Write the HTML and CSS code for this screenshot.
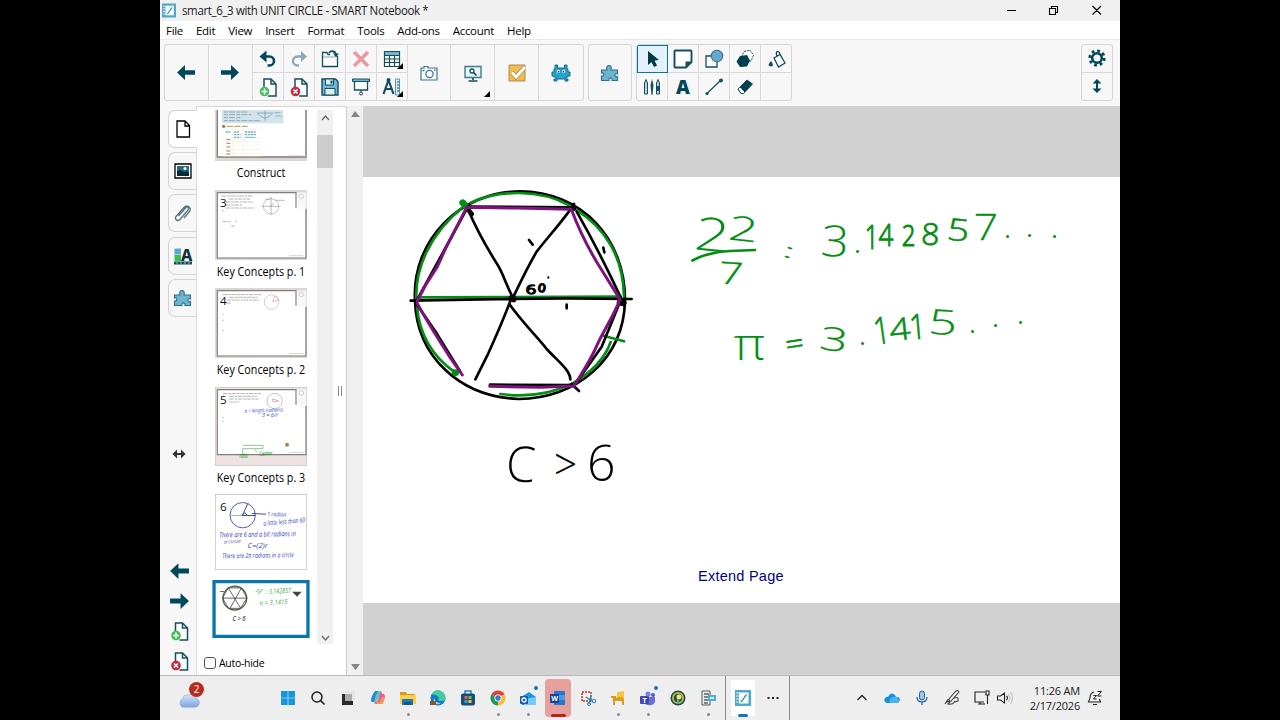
FILE: index.html
```html
<!DOCTYPE html>
<html lang="en">
<head>
<meta charset="utf-8">
<title>smart_6_3 with UNIT CIRCLE - SMART Notebook</title>
<link rel="stylesheet" href="styles.css">
</head>
<body>
<svg width="0" height="0" class="defs">
  <defs>
    <symbol id="left" viewBox="0 0 20 16"><path d="M1 8 9 .5v5.200h10v4.600H9v5.200z" fill="#00485a"/></symbol>
    <symbol id="right" viewBox="0 0 20 16"><path d="M19 8 11 .5v5.200H1v4.600h10v5.200z" fill="#00485a"/></symbol>
    <symbol id="page-add" viewBox="0 0 18 20"><path d="M5 10V2h7l5 5v12H9" fill="#fff" stroke="#174e5c" stroke-width="1.500"/><path d="M12 2v5h5" fill="none" stroke="#174e5c" stroke-width="1.500"/><circle cx="5.500" cy="14.500" r="4.800" fill="#43bd58"/><path d="M5.500 11.500v6m-3-3h6" stroke="#fff" stroke-width="1.500"/></symbol>
    <symbol id="page-del" viewBox="0 0 18 20"><path d="M5 10V2h7l5 5v12H9" fill="#fff" stroke="#174e5c" stroke-width="1.500"/><path d="M12 2v5h5" fill="none" stroke="#174e5c" stroke-width="1.500"/><circle cx="5.500" cy="14.500" r="4.800" fill="#c52944"/><path d="m3.500 12.500 4 4m0-4-4 4" stroke="#fff" stroke-width="1.500"/></symbol>
    <symbol id="puzzle" viewBox="0 0 20 20"><path d="M1.500 17.500v-4.500c3 1 3-4 0-3V7H7C5 1 13 1 11 7h6.500v4c-3.500-1.500-3.500 4 0 2.500v4H12c1-3.500-4-3.500-3 0z" fill="#6eb4d0" stroke="#2b6f88" stroke-width="1.100"/></symbol>
    <symbol id="notebook" viewBox="0 0 16 16"><path fill="#4fa9c9" d="M0 0h16v16H0z"/><path fill="#fff" d="M4 2.500h9.500v11H4z"/><path d="m6 11 5-7 1 1-5 7-2 .5z" fill="#3595b8"/><path d="M1 3h3M1 6h3M1 9h3M1 12h3" stroke="#e5f5fa"/></symbol>
    <symbol id="corner" viewBox="0 0 6 6"><path d="M6 0v6H0z" fill="#000"/></symbol>
  </defs>
</svg>
<div class="window">
  <header class="titlebar">
    <svg class="app-icon"><use href="#notebook"/></svg>
    <span class="title">smart_6_3 with UNIT CIRCLE - SMART Notebook *</span>
    <svg class="controls" viewBox="0 0 120 20"><path d="M12 9.500h9M54.500 7.500h6v6h-6zM56.500 7.500v-2h6v6h-2M97.500 5l8.500 8.500m0-8.500L97.500 13.500" fill="none" stroke="#000" stroke-width="1.100"/></svg>
  </header>
  <nav class="menubar"><span>File</span><span>Edit</span><span>View</span><span>Insert</span><span>Format</span><span>Tools</span><span>Add-ons</span><span>Account</span><span>Help</span></nav>

  <section class="toolbar">
    <div class="group main-tools">
      <div class="big"><svg class="arrow"><use href="#left"/></svg></div>
      <div class="big"><svg class="arrow"><use href="#right"/></svg></div>
      <div class="grid">
        <div class="cell"><svg class="i18" viewBox="0 0 18 18"><path d="M4 6.500h6.500a4.500 4.500 0 0 1 0 9H8.500" fill="none" stroke="#00485a" stroke-width="2.600"/><path d="M.5 6.500 7.500.5v12z" fill="#00485a"/></svg></div>
        <div class="cell"><svg class="i18" viewBox="0 0 18 18"><path d="M14 6.500H7.500a4.500 4.500 0 0 0 0 9H9" fill="none" stroke="#8caab0" stroke-width="2.400"/><path d="m17 6.500-6-5.500v11z" fill="#8caab0"/></svg></div>
        <div class="cell"><svg class="i20" viewBox="0 0 20 20"><path d="M10 5.500H8L7 3.500H2.500v14h15V7" fill="#fff" stroke="#174e5c" stroke-width="1.300"/><path d="M3 8h12" stroke="#7aa" /><path d="M9 4c2-3 6-2 7 1" fill="none" stroke="#174e5c" stroke-width="1.800"/><path d="M13 4.500h6L16 8.500z" fill="#174e5c"/></svg></div>
        <div class="cell"><svg class="i18" viewBox="0 0 18 18"><path d="m2 2 14 14m0-14L2 16" stroke="#e99aa2" stroke-width="3.600"/></svg></div>
        <div class="cell"><svg class="i18" viewBox="0 0 18 18"><path d="M1.500 1.500h15v15h-15z" fill="#fff"/><path d="M1.500 1.500h15v3.500h-15z" fill="#73b4d3"/><path d="M1.500 1.500h15v15h-15zM1.500 5.500h15M1.500 9h15M1.500 12.500h15M6.500 5v11.500m5-11.500v11.500" fill="none" stroke="#174e5c" stroke-width="1.200"/></svg><svg class="corner"><use href="#corner"/></svg></div>
        <div class="cell"><svg class="i20"><use href="#page-add"/></svg></div>
        <div class="cell"><svg class="i20"><use href="#page-del"/></svg></div>
        <div class="cell"><svg class="i18" viewBox="0 0 18 18"><path d="M1 1h13.500L17 3.500V17H1z" fill="#6eb4d8" stroke="#174e5c" stroke-width="1.400"/><path d="M4.500 1h8v6h-8zM4 10.500h10V17H4z" fill="#dceef6" stroke="#174e5c"/><path d="M9.500 2.500h2v3h-2z" fill="#174e5c"/></svg></div>
        <div class="cell"><svg class="i18" viewBox="0 0 18 18"><path d="M2.500 3h13v9h-13z" fill="#fff" stroke="#174e5c" stroke-width="1.300"/><path d="M.5 1h17v2.500H.5z" fill="#6eb4d8" stroke="#174e5c"/><path d="M9 12v2" stroke="#174e5c"/><circle cx="9" cy="15.500" r="1.500" fill="none" stroke="#174e5c"/></svg></div>
        <div class="cell"><svg class="i20" viewBox="0 0 20 20"><path d="m6.500 3-5 14M6.500 3l5 14M3 12h7" fill="none" stroke="#174e5c" stroke-width="2.200"/><circle cx="6.500" cy="3" r="2" fill="#174e5c"/><path d="M13.500 2h4v16h-4z" fill="#d9edf5" stroke="#5594aa"/><path d="M15 5h2m-2 3h2m-2 3h2m-2 3h2" stroke="#174e5c"/></svg><svg class="corner"><use href="#corner"/></svg></div>
      </div>
      <div class="big"><svg class="i18" viewBox="0 0 18 18"><path d="M1 4h3V2.500h4V4h9v12H1z" fill="#f7fafb" stroke="#39788b" stroke-width="1.200"/><circle cx="9.500" cy="10" r="3.600" fill="#fff" stroke="#39788b" stroke-width="1.200"/><path d="M2.500 6.500h2M14 6h1.500" stroke="#39788b" stroke-width="1.500"/></svg></div>
      <div class="big"><svg class="i20" viewBox="0 0 20 20"><path d="M2 3.500h16v11H2z" fill="#e9f4f9" stroke="#3d7c8e" stroke-width="1.400"/><circle cx="9" cy="8" r="2" fill="#fff" stroke="#174e5c" stroke-width="1.300"/><path d="m10.500 9.500 3 3M10 15v2M5.500 18h9" stroke="#174e5c" stroke-width="1.700"/></svg><svg class="corner"><use href="#corner"/></svg></div>
      <div class="big"><svg class="i18" viewBox="0 0 18 18"><path d="M1 1h16v16H1z" fill="#f0bc52" stroke="#ab8a50"/><path d="m4 8.500 4 4.500L17 3" fill="none" stroke="#a17d40" stroke-width="4.300"/><path d="m4 8.500 4 4.500L17 3" fill="none" stroke="#fff" stroke-width="3"/></svg></div>
      <div class="big"><svg class="i20" viewBox="0 0 20 20"><path d="M4 2h2.500v3h7V2H16v4h1v3h2v4h-2v1h-2v2h2v2h-3v-2H6v2H3v-2h2v-2H3v-1H1V9h2V6h1z" fill="#20a4d0" stroke="#1b6a88"/><path d="M6 7h2.500v3H6zM11.500 7H14v3h-2.500z" fill="#fff"/><path d="M7 8h1v1.500H7zM12 8h1v1.500h-1z" fill="#123"/></svg></div>
    </div>
    <div class="group addon"><div class="big"><svg class="i20"><use href="#puzzle"/></svg></div></div>
    <div class="group pens">
      <div class="grid">
        <div class="cell selected"><svg class="i18" viewBox="0 0 18 18"><path d="M4 1v14l3.500-3 2.500 5 3-1.500-2.500-5L15 10z" fill="#003848"/></svg></div>
        <div class="cell"><svg class="i20" viewBox="0 0 20 20"><path d="M1.500 2.500q0-1 1-1h15q1 0 1 1V13l-5.500 5.500H2.500q-1 0-1-1z" fill="#fff" stroke="#174e5c" stroke-width="1.900"/><path d="M12.500 18.500v-6h6z" fill="#174e5c"/></svg></div>
        <div class="cell"><svg class="i20" viewBox="0 0 20 20"><path d="M2 7h11v11H2z" fill="#fff" stroke="#174e5c" stroke-width="1.300"/><circle cx="13" cy="7" r="5.700" fill="#65a9cf" stroke="#356f8d" stroke-width="1.100"/></svg></div>
        <div class="cell"><svg class="i20" viewBox="0 0 20 20"><path d="m9 2.500 6-1.300 3.500 5L16 12l-6 1-3-6z" fill="#fff" stroke="#174e5c" stroke-dasharray="2 1"/><path d="m5 7 7-1 3 5.500-3 6-7 .5-3.500-5.500z" fill="#003f50"/></svg></div>
        <div class="cell"><svg class="i18" viewBox="0 0 18 18"><path d="m6 8 6-3.500L17 13l-6.500 4zM9 7q-2-7 2-5l3 6" fill="#fff" stroke="#174e5c" stroke-width="1.300"/><path d="M3 11q-5 5 0 5.500Q7 16 3 11" fill="#174e5c"/></svg></div>
        <div class="cell"><svg class="i20" viewBox="0 0 20 20"><path d="M2.500 17V6L4 2.500 5.500 6v11zM14.500 17V6L16 2.500 17.500 6v11z" fill="#b6d3dd" stroke="#174e5c"/><path d="M10 2 8.500 8l1 10h1l1-10z" fill="#174e5c"/><path d="M14.500 9h3v5h-3z" fill="#174e5c"/></svg></div>
        <div class="cell letter-a">A</div>
        <div class="cell"><svg class="i20" viewBox="0 0 20 20"><path d="M2.500 17 17 3" stroke="#174e5c" stroke-width="1.200"/><circle cx="3" cy="16.500" r="1.600" fill="#174e5c"/><circle cx="17" cy="3.500" r="2" fill="#174e5c"/></svg></div>
        <div class="cell"><svg class="i18" viewBox="0 0 18 18"><path d="m2 11 9-9 5.500 4-9 9.500H5z" fill="#003f50" stroke="#174e5c"/><path d="m2 11 2-2 5 5-1.500 1.500H5z" fill="#fff" stroke="#174e5c"/></svg></div>
        <div class="cell"></div>
      </div>
    </div>
    <div class="group right-tools">
      <div class="cell"><svg class="i18" viewBox="0 0 18 18"><circle cx="9" cy="9" r="4.800" fill="none" stroke="#00485a" stroke-width="2.600"/><circle cx="9" cy="9" r="7.200" fill="none" stroke="#00485a" stroke-width="2.800" stroke-dasharray="2.800 2.850"/></svg></div>
      <div class="cell"><svg class="i16" viewBox="0 0 16 16"><path d="M8 1 3.500 5.500H7v5H3.500L8 15l4.500-4.500H9v-5h3.500z" fill="#00485a"/></svg></div>
    </div>
  </section>

  <main class="workspace">
    <aside class="rail">
      <div class="tab active"><svg class="i20" viewBox="0 0 20 20"><path d="M4 2h8l4.500 4.500V18H4zM12 2v5h4.500" fill="#fff" stroke="#000" stroke-width="1.300"/></svg></div>
      <div class="tab"><svg class="i20" viewBox="0 0 20 20"><path d="M2 3h16v14H2z" fill="#fff" stroke="#000" stroke-width="1.300"/><path d="M4 5h12v10H4z" fill="#286a80"/><path d="m4 10 3-1 4 2 3-1 2 2v3H4z" fill="#082b36"/><circle cx="12" cy="7.500" r="1.500" fill="#fff"/></svg></div>
      <div class="tab"><svg class="i20" viewBox="0 0 20 20"><path d="m5.500 13 7-8c2-2 4 0 2.500 2l-8 9.500c-2.500 2.500-6-.5-4-3L11 4.500c3-3.500 8 .5 5.500 4L11 15" fill="none" stroke="#567681" stroke-width="1.300"/></svg></div>
      <div class="tab"><svg class="i20" viewBox="0 0 20 20"><path d="M1.500 2.500H8v6H1.500z" fill="#5ba8c8"/><path d="M1.500 9H8v6H1.500z" fill="#39bd55"/><path d="M1 15.500h18v3H1z" fill="#174e5c"/><path d="M3 17h15" stroke="#fff" stroke-width=".6" stroke-dasharray="2 2"/></svg><b class="style-a">A</b></div>
      <div class="tab"><svg class="i20"><use href="#puzzle"/></svg></div>
      <svg class="swap" viewBox="0 0 14 12"><path d="M2 6h10" stroke="#333" stroke-width="2"/><path d="M5 1.500.5 6 5 10.500V6zm4 0L13.500 6 9 10.500V6z" fill="#333"/></svg>
      <div class="rail-tools">
        <svg><use href="#left"/></svg><svg><use href="#right"/></svg><svg><use href="#page-add"/></svg><svg><use href="#page-del"/></svg>
      </div>
    </aside>
    <section class="sorter">
      <div class="list-row">
        <div class="thumbs">
          <div class="thumb t1"><svg viewBox="163 16 276 153">
            <rect x="163" y="16" width="276" height="153" fill="#dcd7d5"/><path d="M170 10h264v147H170z" fill="#fff"/><path d="M170 10v147h266V16" fill="none" stroke="#837d7b" stroke-width="4"/>
            <path d="M184 16h184v40H184z" fill="#d2e4eb"/><path d="M190 22h70m-70 8h82m-82 9h50m-50 9h112" stroke="#8fa5b3" stroke-width="3" stroke-dasharray="12 3 18 4"/>
            <path d="M290 25h45m-22-8v32m-24-25q24 32 48 0m5 0h18m-17 10h20" fill="none" stroke="#6994ab" stroke-width="2"/>
            <circle cx="189" cy="65" r="5" fill="#ac783d"/><path d="M199 65h63" stroke="#c5a379" stroke-width="4" stroke-dasharray="18 4"/>
            <path d="M184 74h118M184 155h118M215 74v81m32-81v81M184 99h118M184 110h118m-118 12h118m-118 12h118m-118 12h118" fill="none" stroke="#e6dfba"/>
            <path d="M195 82h14m11 0h15m18 0h32m-65 8h20m12 0h35m-67 8h20m14 0h30" stroke="#6fb4bb" stroke-width="4" stroke-dasharray="7 2"/><path d="M197 105h12m-12 11h12m-12 11h12m-12 12h12m-12 9h12" stroke="#a77b60" stroke-width="3"/><path d="M385 154h43" stroke="#aaa" stroke-width="2"/>
          </svg></div>
          <div class="caption">Construct</div>
          <div class="thumb t2"><svg viewBox="163 255 276 210"><rect x="163" y="255" width="276" height="210" fill="#dcd7d5"/><path d="M170 263h264v195H170z" fill="#fff"/><path d="M170 262v197h266V311M170 263h236v45" fill="none" stroke="#837d7b" stroke-width="3.500"/><path d="M410 263h27v48h-27z" fill="#f7f7f7"/><circle cx="422" cy="274" r="7" fill="none" stroke="#bbb" stroke-width="2"/>
            <path d="M184 273h95m-74 9h64m-74 9h82m-82 9h50m-50 9h85M184 317h5m-4 33h27m11 0h5m-16 13h10" stroke="#b0b0b0" stroke-width="3" stroke-dasharray="13 3 8 2"/><circle cx="331" cy="304" r="23" fill="none" stroke="#aaa" stroke-width="2"/><path d="M302 304h58m-29-29v55m-18-47h15m14 3h30m-33 8-9 10" stroke="#999" stroke-width="2"/><path d="M385 452h43" stroke="#bbb" stroke-width="2"/><text class="page-no" x="178" y="306">3</text></svg></div>
          <div class="caption">Key Concepts p. 1</div>
          <div class="thumb t3"><svg viewBox="163 255 276 210"><rect x="163" y="255" width="276" height="210" fill="#dcd7d5"/><path d="M170 263h264v195H170z" fill="#fff"/><path d="M170 262v197h266V311M170 263h236v45" fill="none" stroke="#837d7b" stroke-width="3.500"/><path d="M410 263h27v48h-27z" fill="#f7f7f7"/><circle cx="422" cy="274" r="7" fill="none" stroke="#bbb" stroke-width="2"/>
            <path d="M187 275h114m-95 8h84m-92 8h98m-98 9h14M185 334h4m-4 18h4m-4 30h4" stroke="#b0b0b0" stroke-width="3" stroke-dasharray="13 3 8 2"/><circle cx="333" cy="297" r="22" fill="none" stroke="#bbb" stroke-width="2"/><path d="m335 296 8-18 12 14-18 3" fill="none" stroke="#dc9696" stroke-width="2"/><path d="M385 452h43" stroke="#bbb" stroke-width="2"/><text class="page-no" x="178" y="306">4</text></svg></div>
          <div class="caption">Key Concepts p. 2</div>
          <div class="thumb t4"><svg viewBox="163 288 276 237"><rect x="163" y="288" width="276" height="237" fill="#eee3e2" stroke="#c8c4c3" stroke-width="4"/><path d="M170 296h264v194H170z" fill="#fff"/><path d="M170 295v196h266V344M170 296h236v45" fill="none" stroke="#837d7b" stroke-width="3.500"/><path d="M410 296h27v48h-27z" fill="#f7f7f7"/><circle cx="422" cy="306" r="7" fill="none" stroke="#bbb" stroke-width="2"/>
            <path d="M187 308h114m-95 8h84m-84 8h88m-88 9h30M185 380h4m-4 12h4" stroke="#b0b0b0" stroke-width="3" stroke-dasharray="13 3 8 2"/><circle cx="342" cy="330" r="23" fill="none" stroke="#aaa" stroke-width="2"/><path d="m336 324 18 6-17 3z" fill="none" stroke="#dc8585" stroke-width="2"/><path d="M246 463h61v10h-61v17m36-14 7 7" fill="none" stroke="#58a958" stroke-width="2"/><circle cx="379" cy="461" r="6" fill="#a6865c"/>
            <text class="mini blue" data-box="252 351 115 16 -2">a = length (radians)</text><text class="mini blue" data-box="304 366 48 11 0">3 = 6/r</text><text class="mini green" data-box="236 484 25 16 0">radius</text><text class="mini green" data-box="296 480 40 13 -4">Center</text><path d="M385 484h43" stroke="#bbb" stroke-width="2"/><text class="page-no" x="178" y="339">5</text></svg></div>
          <div class="caption">Key Concepts p. 3</div>
          <div class="thumb t5"><svg viewBox="163 27 276 227"><rect x="164" y="28" width="274" height="225" fill="#fff" stroke="#bbb" stroke-width="2"/><circle cx="246" cy="90" r="38" fill="none" stroke="#555db0" stroke-width="3"/><path d="M208 91h37" stroke="#91cb94" stroke-width="3"/><path d="m245 91 17-37m-17 37h39m-39 0q8-16 14 0m15-6 42 2" fill="none" stroke="#3c4daa" stroke-width="3"/>
            <text class="mini blue" data-box="322 80 54 14 2">1 radian</text><text class="mini blue" data-box="308 101 126 16 -5">a little less than 60</text><text class="mini blue" data-box="177 138 228 17 -1">There are 6 and a bit radians in</text><text class="mini blue" data-box="190 163 50 11 -3">a circle</text><text class="mini blue" data-box="262 173 60 20 0">C=(2)r</text><text class="mini blue" data-box="186 202 213 16 -1">There are 2π radians in a circle</text><text class="page-no" x="178" y="77">6</text></svg></div>
          <div class="thumb t6"><svg viewBox="155 285 295 176"><path d="M160 290h285v166H160z" fill="#fff" stroke="#0876aa" stroke-width="10"/><circle cx="223" cy="340" r="36" fill="none" stroke="#506550" stroke-width="4"/><path d="m203 309-17 31 18 31h36l20-31-17-31zm0 0 38 62m2-62-34 61m-23-30h74M178 320h12" fill="none" stroke="#444" stroke-width="2.500"/><path d="M397 321h29l-14 15z" fill="#444"/>
            <text class="mini black" data-box="217 393 39 16 0">C &gt; 6</text><text class="mini lime" data-box="286 311 20 9 0">22</text><text class="mini lime" data-box="291 323 10 9 0">7</text><text class="mini lime" data-box="318 310 76 16 -3">: 3.142857</text><text class="mini lime" data-box="298 345 85 15 -3">π = 3.1415</text></svg></div>
        </div>
        <div class="scroll-small"><svg viewBox="0 0 16 534"><path d="M0 25h16v33H0z" fill="#cdcdcd"/><path d="m5 10 3.500-4 3.500 4M5 526l3.500 4 3.500-4" fill="none" stroke="#666" stroke-width="1.200"/></svg></div>
      </div>
      <div class="autohide"><i></i><span>Auto-hide</span></div>
    </section>
    <div class="splitter"><i></i></div>
    <div class="scroll-main"><svg viewBox="0 0 16 568"><path d="m4 11 4-6 5 6zM4 558h9l-4.500 6z" fill="#858585"/></svg></div>
    <section class="canvas">
      <div class="page">
        <svg viewBox="363 177 757 426">
          <g transform="translate(400 180) scale(.33333)" fill="none" stroke-linecap="round" stroke-linejoin="round">
            <path class="kb" d="M45 362C35 180 180 35 360 34C545 35 675 175 675 360C672 540 525 658 355 657C180 650 50 530 45 362"/>
            <path class="kg" d="M49 360C45 270 85 165 190 80M212 68C300 28 420 28 508 76M526 88C615 142 670 230 672 350M51 380C58 460 90 525 165 577M301 642C380 653 455 640 515 612C570 580 615 535 632 486"/>
            <path class="kg blob" d="M188 68l8 8M165 578h2"/>
            <path class="kg" d="M55 352 662 350M610 467l62 17"/>
            <path class="kb" d="M32 362 200 359 330 357 500 355 695 357M205 90C230 150 265 210 290 250C310 280 320 320 340 355M522 72C500 110 440 175 410 215C380 265 355 320 338 355M330 365C310 420 285 475 265 520L226 598M330 375C370 430 415 475 440 507C475 545 510 570 511 598M205 80l305 2M530 95C570 165 610 240 662 352M200 87 125 225 52 358M48 370 110 460 181 575M655 378 605 500 524 615 270 614M515 612l22 21M387 180l11 14M610 203l3 14M500 374v11"/>
            <path class="kb blob" d="M335 355l5 2M660 367l10 2"/>
            <path class="kb" d="M207 92l8 10M516 83l5 3" style="stroke-width:14"/>
            <path class="kp" d="M52 362 80 310 112 260 138 203 200 82 350 84 514 88C535 145 570 215 605 270L660 358C645 400 618 440 595 487C575 535 555 565 522 618L420 622 269 619M52 370C75 415 120 485 150 532L187 585"/>
            <path d="M445 292v1" stroke="#000" stroke-width="6"/>
          </g>
          <path class="rule" d="M692.500 260.500C702 255 715 252 730 251L755 250"/>
          <g class="ink green">
            <text data-box="698 217 28 34 6">2</text><text data-box="731 216 24 25 6">2</text><text data-box="721 262 20 22 4">7</text><text data-box="786 247 5 11 18">:</text>
            <text data-box="823 225 23 32 4">3</text><text data-box="856 250 3 3 0">.</text><text data-box="867 225 6 24 0">1</text><text data-box="879 223 14 23 0">4</text><text data-box="903 224 11 22 0">2</text><text data-box="923 223 15 22 3">8</text><text data-box="950 219 17 22 6">5</text><text data-box="976 214 20 26 0">7</text><text data-box="1006 235 3 3 0">.</text><text data-box="1028 234 3 3 0">.</text><text data-box="1053 235 3 3 0">.</text>
            <text data-box="734 336 30 24 0">π</text><text data-box="787 340 15 7 -9">=</text><text data-box="822 327 23 24 8">3</text><text data-box="861 342 3 3 0">.</text><text data-box="876 317 7 27 -8">1</text><text data-box="890 318 20 22 -6">4</text><text data-box="912 314 7 25 -5">1</text><text data-box="932 310 22 25 4">5</text><text data-box="971 330 3 3 0">.</text><text data-box="994 324 3 3 0">.</text><text data-box="1019 321 3 3 0">.</text>
          </g>
          <g class="ink black"><text data-box="509 446 25 36 4">C</text><text data-box="556 454 19 21 0">&gt;</text><text data-box="590 444 23 37 0">6</text><text data-box="527 285 8 9 0">6</text><text data-box="539 284 6 8 8">0</text></g>
        </svg>
        <div class="extend">Extend Page</div>
      </div>
    </section>
  </main>

  <footer class="taskbar">
    <div class="weather"><svg viewBox="0 0 28 28"><defs><linearGradient id="cl" y2="1" x2="0"><stop stop-color="#d8e7f8"/><stop offset="1" stop-color="#7da5e0"/></linearGradient></defs><path d="M6 26a5 5 0 0 1 0-9q1-5 6-4 6-3 8 3 5 2 4 6-1 4-4 4z" fill="url(#cl)" stroke="#87a7d4" stroke-width=".6"/></svg><b>2</b></div>
    <div class="apps">
      <div class="app"><svg viewBox="0 0 16 16"><path d="M1 1h6.700v6.700H1zM8.300 1H15v6.700H8.300zM1 8.300h6.700V15H1zM8.300 8.300H15V15H8.300z" fill="#1697df"/></svg></div>
      <div class="app"><svg viewBox="0 0 16 16"><circle cx="7" cy="7" r="5" fill="none" stroke="#222" stroke-width="1.500"/><path d="m10.500 10.500 4 4" stroke="#222" stroke-width="1.700"/></svg></div>
      <div class="app"><svg viewBox="0 0 16 16"><path d="M5 1h10v10H5z" fill="#e5e5e5"/><path d="M2 4h3v7h8v4H2z" fill="#2b2b2b"/><path d="M5 4h7v7H5z" fill="#aaa"/></svg></div>
      <div class="app"><svg viewBox="0 0 16 16"><path d="M5 1h6L9 6 6 12H2Q0 11 2 6z" fill="#2389e5"/><path d="M10 1q2 0 2 3h2q2 2 0 6l-2 4H6q-2 0-2-3h4z" fill="#e75bb0"/><path d="m6 5 2-4h3l-2 5-2 6H4z" fill="#69c99f"/><path d="M6 12h4l2-5h3q-1 7-4 7H7z" fill="#f29d45"/></svg></div>
      <div class="app run"><svg viewBox="0 0 16 16"><path d="M0 2h6l1 2h8v4H0z" fill="#d99a20"/><path d="M0 5h16v9H0z" fill="#ffcf48"/><path d="M2 9h11v6H2z" fill="#1979ba"/><path d="M4 12h7v3H4z" fill="#0b568e"/></svg></div>
      <div class="app"><svg viewBox="0 0 16 16"><circle cx="8" cy="8" r="7.500" fill="#1479bd"/><path d="M1 5Q8-5 15 5q2 6-4 6-4 0-2-3Q6 3 1 5" fill="#44cda1"/><path d="M5 8q-1 5 6 5-5 3-8-1z" fill="#92d9ed"/><path d="M0 11h6v4H0z" fill="#8b582a"/></svg></div>
      <div class="app"><svg viewBox="0 0 16 16"><path d="M5 4V1h6v3" fill="none" stroke="#2389bc" stroke-width="1.500"/><rect x="1" y="3.500" width="14" height="12" rx="2" fill="#174e78"/><path fill="#ec6341" d="M4.500 6h3v3h-3z"/><path fill="#82bb42" d="M8.500 6h3v3h-3z"/><path fill="#34a9db" d="M4.500 10h3v3h-3z"/><path fill="#f6c443" d="M8.500 10h3v3h-3z"/></svg></div>
      <div class="app run"><svg viewBox="0 0 16 16"><path d="M8 8 1.500 4.200A7.500 7.500 0 0 1 14.500 4.200z" fill="#df4335"/><path d="M8 8 1.500 4.200A7.500 7.500 0 0 0 8 15.500z" fill="#25975a"/><path d="M8 8h0l6.500-3.800A7.500 7.500 0 0 1 8 15.500z" fill="#f4bd34"/><circle cx="8" cy="8" r="3.600" fill="#fff"/><circle cx="8" cy="8" r="2.700" fill="#367bd5"/></svg></div>
      <div class="app run notify"><svg viewBox="0 0 16 16"><path d="m1 7 8-5 7 5v8H2z" fill="#2493df"/><path d="m5 9 11-2v8H4z" fill="#75ccf3"/><rect y="6" width="8" height="8" rx="1" fill="#155eae"/><circle cx="4" cy="10" r="2" fill="none" stroke="#fff" stroke-width="1.300"/></svg></div>
      <div class="app word"><svg viewBox="0 0 16 16"><path d="M4 1h11v14H4z" fill="#2678d0"/><path d="M4 5h11v5H4z" fill="#459ce2"/><rect y="4" width="9" height="9" rx="1" fill="#154696"/><text x="1.200" y="11" class="tile">W</text></svg></div>
      <div class="app"><svg viewBox="0 0 16 16"><path d="M2 2h9v9H2z" fill="none" stroke="#b53c2b" stroke-width="1.500" stroke-dasharray="2 1"/><path d="m6 7 7 5M11 6l-2 8" stroke="#2385b3" stroke-width="1.300"/><circle cx="14" cy="11" r="1.800" fill="none" stroke="#2385b3"/><circle cx="9" cy="14" r="1.500" fill="none" stroke="#2385b3"/></svg></div>
      <div class="app run"><svg viewBox="0 0 16 16"><path d="M7 2 14 1v8l-7 1z" fill="#f4c741"/><path d="m3 8 8-1 3 2v6h-2v-4H5v4H3zM1 6h5v2H1z" fill="#db9b1c"/></svg></div>
      <div class="app run notify"><svg viewBox="0 0 16 16"><circle cx="8" cy="4" r="2.500" fill="#777be4"/><circle cx="13" cy="5" r="2" fill="#5157bf"/><path d="M4 7h11v5q-2 4-7 3-3 0-4-3z" fill="#6870d5"/><rect y="6" width="9" height="8" rx="1" fill="#4049ad"/><text x="2.500" y="12.500" class="tile">T</text></svg></div>
      <div class="app"><svg viewBox="0 0 16 16"><circle cx="8" cy="8" r="7.500" fill="#1b4e49"/><circle cx="8" cy="8" r="5" fill="none" stroke="#b6b34a" stroke-width="2"/><circle cx="9" cy="7" r="2.500" fill="#eee573"/><path d="M8 9v5" stroke="#53ad98" stroke-width="2"/></svg></div>
      <div class="app run"><svg viewBox="0 0 16 16"><path d="M2 1h8v14H2z" fill="#e9eeee" stroke="#4e5b5b"/><path d="M4 4h5M4 7h4m-4 3h5m-5 3h4" stroke="#59636a" stroke-width="1.500"/><path d="M8 5h8v6H8z" fill="#4facd4"/><path d="M10 7h4v2h-4z" fill="#d9f3fc"/></svg></div>
      <div class="app current"><svg><use href="#notebook"/></svg></div>
      <div class="app more"><svg viewBox="0 0 16 16"><path d="M2.500 8h2m2.500 0h2m2.500 0h2" stroke="#222" stroke-width="2"/></svg></div>
    </div>
    <div class="tray">
      <svg viewBox="0 0 16 16"><path d="m3.500 10 4.500-4.500 4.500 4.500" fill="none" stroke="#222" stroke-width="1.300"/></svg>
      <svg viewBox="0 0 16 16"><path d="M3 13Q-1 12 1 8q2-2 3-1Q7 1 11 5l1 2q5 0 3.500 4Q15 13 12 13z" fill="#158ee0"/><path d="M6 13q-2-5 3-6 5-1 6 4 0 2-3 2z" fill="#43b5f5"/></svg>
      <svg viewBox="0 0 16 16"><rect x="5.500" y="1" width="5" height="9" rx="2.500" fill="#9fc6ec" stroke="#205ca8"/><path d="M3 7q0 5 5 5t5-5M8 12v3" fill="none" stroke="#205ca8" stroke-width="1.200"/></svg>
      <svg viewBox="0 0 16 16"><path d="m4 10 8-9q2-1 3 1L7 11l-4 1zM1 14q4-8 5-2l-2 2q5 1 7-3m-1-3q5-2 4 3l-3 1" fill="none" stroke="#444" stroke-width="1.100"/></svg>
      <svg viewBox="0 0 16 16"><path d="M11 2H1v10h9M4 14h7M6 12v2M12 1h3v4h-3zM13.500 5v9" fill="none" stroke="#222" stroke-width="1.100"/></svg>
      <svg class="sound" viewBox="0 0 16 16"><path d="M1 6h3l4-3v10l-4-3H1zM10 6q2 2 0 4" fill="none" stroke="#222" stroke-width="1.100"/><path d="M12 4q3 4 0 8m2-10q4 6 0 12" fill="none" stroke="#bbb"/></svg>
      <div class="clock"><span>11:26 AM</span><span>2/17/2026</span></div>
      <svg class="bell" viewBox="0 0 16 16"><path d="M7 2Q3 3 3 8l-1.500 4h12l-1-3M6 14.500h4" fill="none" stroke="#222" stroke-width="1.100"/><path d="M10.500 1.500h4l-4 4.500h4M6.500 5.500h3l-3 3.500h3" fill="none" stroke="#222"/></svg>
    </div>
  </footer>
</div>
<script src="ink.js"></script>
</body>
</html>
```

FILE: styles.css
```css
* { box-sizing: border-box; }
body { margin: 0; background: #000; overflow: hidden; font-family: "Open Sans", "Noto Sans", sans-serif; color: #1b1b1b; }
svg { display: block; flex: none; }
.defs { position: absolute; }
.window { width: 960px; height: 720px; margin: 0 auto; background: #f7f7f7; display: flex; flex-direction: column; overflow: hidden; }
.titlebar { height: 21px; flex: none; background: #f0f0f0; display: flex; align-items: center; padding-left: 2px; }
.app-icon { width: 14px; height: 15px; }
.title { font-size: 12px; letter-spacing: -.37px; margin-left: 6px; white-space: nowrap; flex: 1; transform: scaleX(.957); transform-origin: left; }
.controls { width: 120px; height: 20px; margin-right: 5px; }
.menubar { height: 18px; flex: none; background: #fff; color: #000; display: flex; align-items: center; gap: 13px; padding-left: 6px; font-size: 11.500px; letter-spacing: -.3px; }
.toolbar { height: 67px; flex: none; border-top: 1px solid #e7e7e7; display: flex; padding: 4px 7.500px 0 4px; gap: 4px; }
.group { height: 57px; border: 1px solid #d5d5d5; border-radius: 3px; display: flex; overflow: hidden; }
.main-tools { width: 420px; }
.addon { width: 44px; }
.pens { width: 156px; }
.big { width: 44px; min-width: 0; display: flex; align-items: center; justify-content: center; position: relative; border-right: 1px solid #d9d9d9; }
.big:last-child { border-right: 0; }
.grid { flex: none; display: grid; grid-template-columns: repeat(5, 31px); grid-template-rows: 28px 27px; }
.cell { min-width: 0; display: flex; align-items: center; justify-content: center; border-right: 1px solid #d9d9d9; border-bottom: 1px solid #d9d9d9; position: relative; }
.pens .cell:nth-child(5n) { border-right: 0; }
.cell:nth-child(n+6) { border-bottom: 0; }
.cell.selected { background: #e3f1fb; border: 1.500px solid #0877a0; }
.i16 { width: 16px; height: 16px; }
.i18 { width: 18px; height: 18px; }
.i20 { width: 20px; height: 20px; }
.arrow { width: 20px; height: 17px; }
.corner { position: absolute; right: 4px; bottom: 3px; width: 6px; height: 6px; }
.letter-a { font: 900 19px "Noto Sans", sans-serif; color: #00485a; }
.right-tools { margin-left: auto; width: 32px; flex-direction: column; }
.right-tools .cell { height: 28px; border-right: 0; }
.right-tools .cell:last-child { border-bottom: 0; }
.workspace { height: 569px; flex: none; display: flex; }
.rail { width: 37px; padding: 4px 0 0 8px; display: flex; flex-direction: column; border-right: 1px solid #ddd; }
.tab { width: 29px; height: 38px; margin-bottom: 4.200px; padding-right: 1px; flex: none; border: 1px solid #d3d3d3; border-right: 0; border-radius: 7px 0 0 7px; display: flex; align-items: center; justify-content: center; position: relative; }
.tab.active { background: #fff; }
.style-a { position: absolute; left: 12px; top: 6px; font: 800 16px "Noto Sans", sans-serif; color: #12303a; }
.swap { width: 14px; height: 12px; margin: 127px 0 0 4px; }
.rail-tools { display: flex; flex-direction: column; gap: 10px; margin: 101px 0 0 1px; }
.rail-tools svg { width: 21px; height: 20px; }
.sorter { width: 136px; background: #fff; border-top: 1px solid #d5d5d5; display: flex; flex-direction: column; }
.list-row { height: 540px; padding-top: 3px; display: flex; }
.thumbs { width: 120px; height: 534px; display: flex; flex-direction: column; align-items: center; padding-left: 7px; overflow: hidden; }
.thumb { width: 92px; flex: none; }
.thumb svg { width: 100%; height: 100%; }
.t1 { height: 51px; }
.t2, .t3 { height: 70px; }
.t4 { height: 79px; }
.t5 { height: 76px; }
.t6 { width: 98px; height: 58px; margin-top: 10px; }
.caption { flex: none; height: 28.500px; width: 120px; text-align: center; font-size: 12px; line-height: 23px; white-space: nowrap; color: #000; transform: scaleX(.895); }
.page-no { font: 35px "Open Sans", sans-serif; fill: #111; }
.scroll-small { width: 16px; height: 534px; background: #f0f0f0; }
.scroll-small svg { width: 16px; height: 534px; }
.autohide { display: flex; align-items: center; gap: 3px; padding: 4px 0 0 7px; height: 27px; font-size: 10.500px; letter-spacing: -.3px; color: #000; }
.autohide i { width: 12px; height: 12px; border: 1px solid #555; border-radius: 3px; }
.splitter { width: 14px; background: #fff; border-top: 1px solid #d5d5d5; border-right: 1px solid #ccc; display: flex; align-items: center; justify-content: center; }
.splitter i { width: 4px; height: 10px; border: solid #888; border-width: 0 1px; }
.scroll-main { width: 16px; background: #f0f0f0; }
.scroll-main svg { width: 16px; height: 568px; }
.canvas { width: 757px; background: #d1d1d1; padding-top: 71px; }
.page { height: 426px; background: #fff; display: grid; }
.page > * { grid-area: 1 / 1; }
.page > svg { width: 757px; height: 426px; }
.extend { align-self: end; margin: 0 0 18px 335px; font: 14.500px/17px "Liberation Sans", sans-serif; letter-spacing: .25px; color: #00008c; z-index: 1; }
.kb { stroke: #000; stroke-width: 8; }
.kg { stroke: #048f14; stroke-width: 8; }
.kp { stroke: #80127f; stroke-width: 9; }
.blob { stroke-width: 20; }
.rule { fill: none; stroke: #048f14; stroke-width: 2.700; stroke-linecap: round; }
.ink text { font-family: "Open Sans", sans-serif; font-weight: 300; stroke-linejoin: round; }
.green { fill: #048f14; stroke: #048f14; }
.black { fill: #000; stroke: #000; }
.blue { fill: #3b45bd; }
.lime { fill: #3aa94a; }
.mini { font-family: "Open Sans", sans-serif; font-style: italic; stroke: none; }
.taskbar { height: 45px; flex: none; background: #eee; border-top: 1px solid #b9b9b9; display: flex; }
.weather { width: 113px; padding: 6px 0 0 17px; position: relative; }
.weather svg { width: 26px; height: 28px; }
.weather b { position: absolute; left: 29px; top: 6px; width: 15px; height: 15px; border-radius: 50%; background: #b92b1c; color: #fff; font-size: 10px; line-height: 15px; text-align: center; font-weight: 400; }
.apps { display: flex; }
.app { width: 30px; display: flex; align-items: center; justify-content: center; position: relative; }
.app svg { width: 16px; height: 16px; }
.run::after { content: ""; position: absolute; left: 13.500px; bottom: 4px; width: 3px; height: 3px; border-radius: 50%; background: #888; }
.notify::before { content: ""; position: absolute; right: 5px; top: 10px; width: 4px; height: 4px; border-radius: 50%; background: #1677ba; }
.word { width: 26px; height: 38px; margin: 3px 2px; background: #e7a19c; border-radius: 4px; }
.word::after, .current::after { content: ""; position: absolute; bottom: 0; width: 15px; height: 3px; border-radius: 2px; background: #b52218; }
.tile { font: bold 7px "Open Sans", sans-serif; fill: #fff; }
.current { width: 65px; border: solid #888; border-width: 0 1px; margin-left: 2px; background: linear-gradient(#fff, #fff) 5px 4px / 24px 36px no-repeat; justify-content: flex-start; padding-left: 9px; }
.current::after { left: 12px; bottom: 3px; width: 10px; background: #1475b0; }
.more { margin-left: -32px; }
.tray { display: flex; align-items: center; margin-left: auto; padding-right: 17px; }
.tray > svg { width: 16px; height: 16px; margin-right: 14px; }
.tray .sound { width: 17px; margin: 0 11px 0 -8px; }
.clock { width: 56px; display: flex; flex-direction: column; align-items: flex-end; font-size: 11px; line-height: 15px; letter-spacing: -.2px; white-space: nowrap; }
.tray .bell { margin: 0 0 0 7px; }
```

FILE: ink.js
```js
// Fit every handwritten note into its box: x, y, width, height, rotation.
const pen = document.createElement("canvas").getContext("2d");
const PEN_WIDTH = 2.7;
const LIGHT_STEM = 6;
document.querySelectorAll("text[data-box]").forEach((el) => {
  const [x, y, w, h, r] = el.dataset.box.split(" ").map(Number);
  const cs = getComputedStyle(el);
  pen.font = `${cs.fontStyle} ${cs.fontWeight} 100px ${cs.fontFamily}`;
  const m = pen.measureText(el.textContent);
  const sx = w / (m.actualBoundingBoxLeft + m.actualBoundingBoxRight);
  const sy = h / (m.actualBoundingBoxAscent + m.actualBoundingBoxDescent);
  el.setAttribute("font-size", "100");
  el.setAttribute("transform",
    `rotate(${r} ${x + w / 2} ${y + h / 2}) translate(${x} ${y}) scale(${sx} ${sy}) ` +
    `translate(${m.actualBoundingBoxLeft} ${m.actualBoundingBoxAscent})`);
  // Thicken small glyphs so that all notes share the same pen width.
  if (el.closest(".ink")) {
    const solid = el.textContent === "." || el.textContent === ":";
    const extra = solid ? 0 : PEN_WIDTH / Math.sqrt(sx * sy) - LIGHT_STEM;
    el.setAttribute("stroke-width", Math.max(0, extra).toFixed(2));
  }
});
```
